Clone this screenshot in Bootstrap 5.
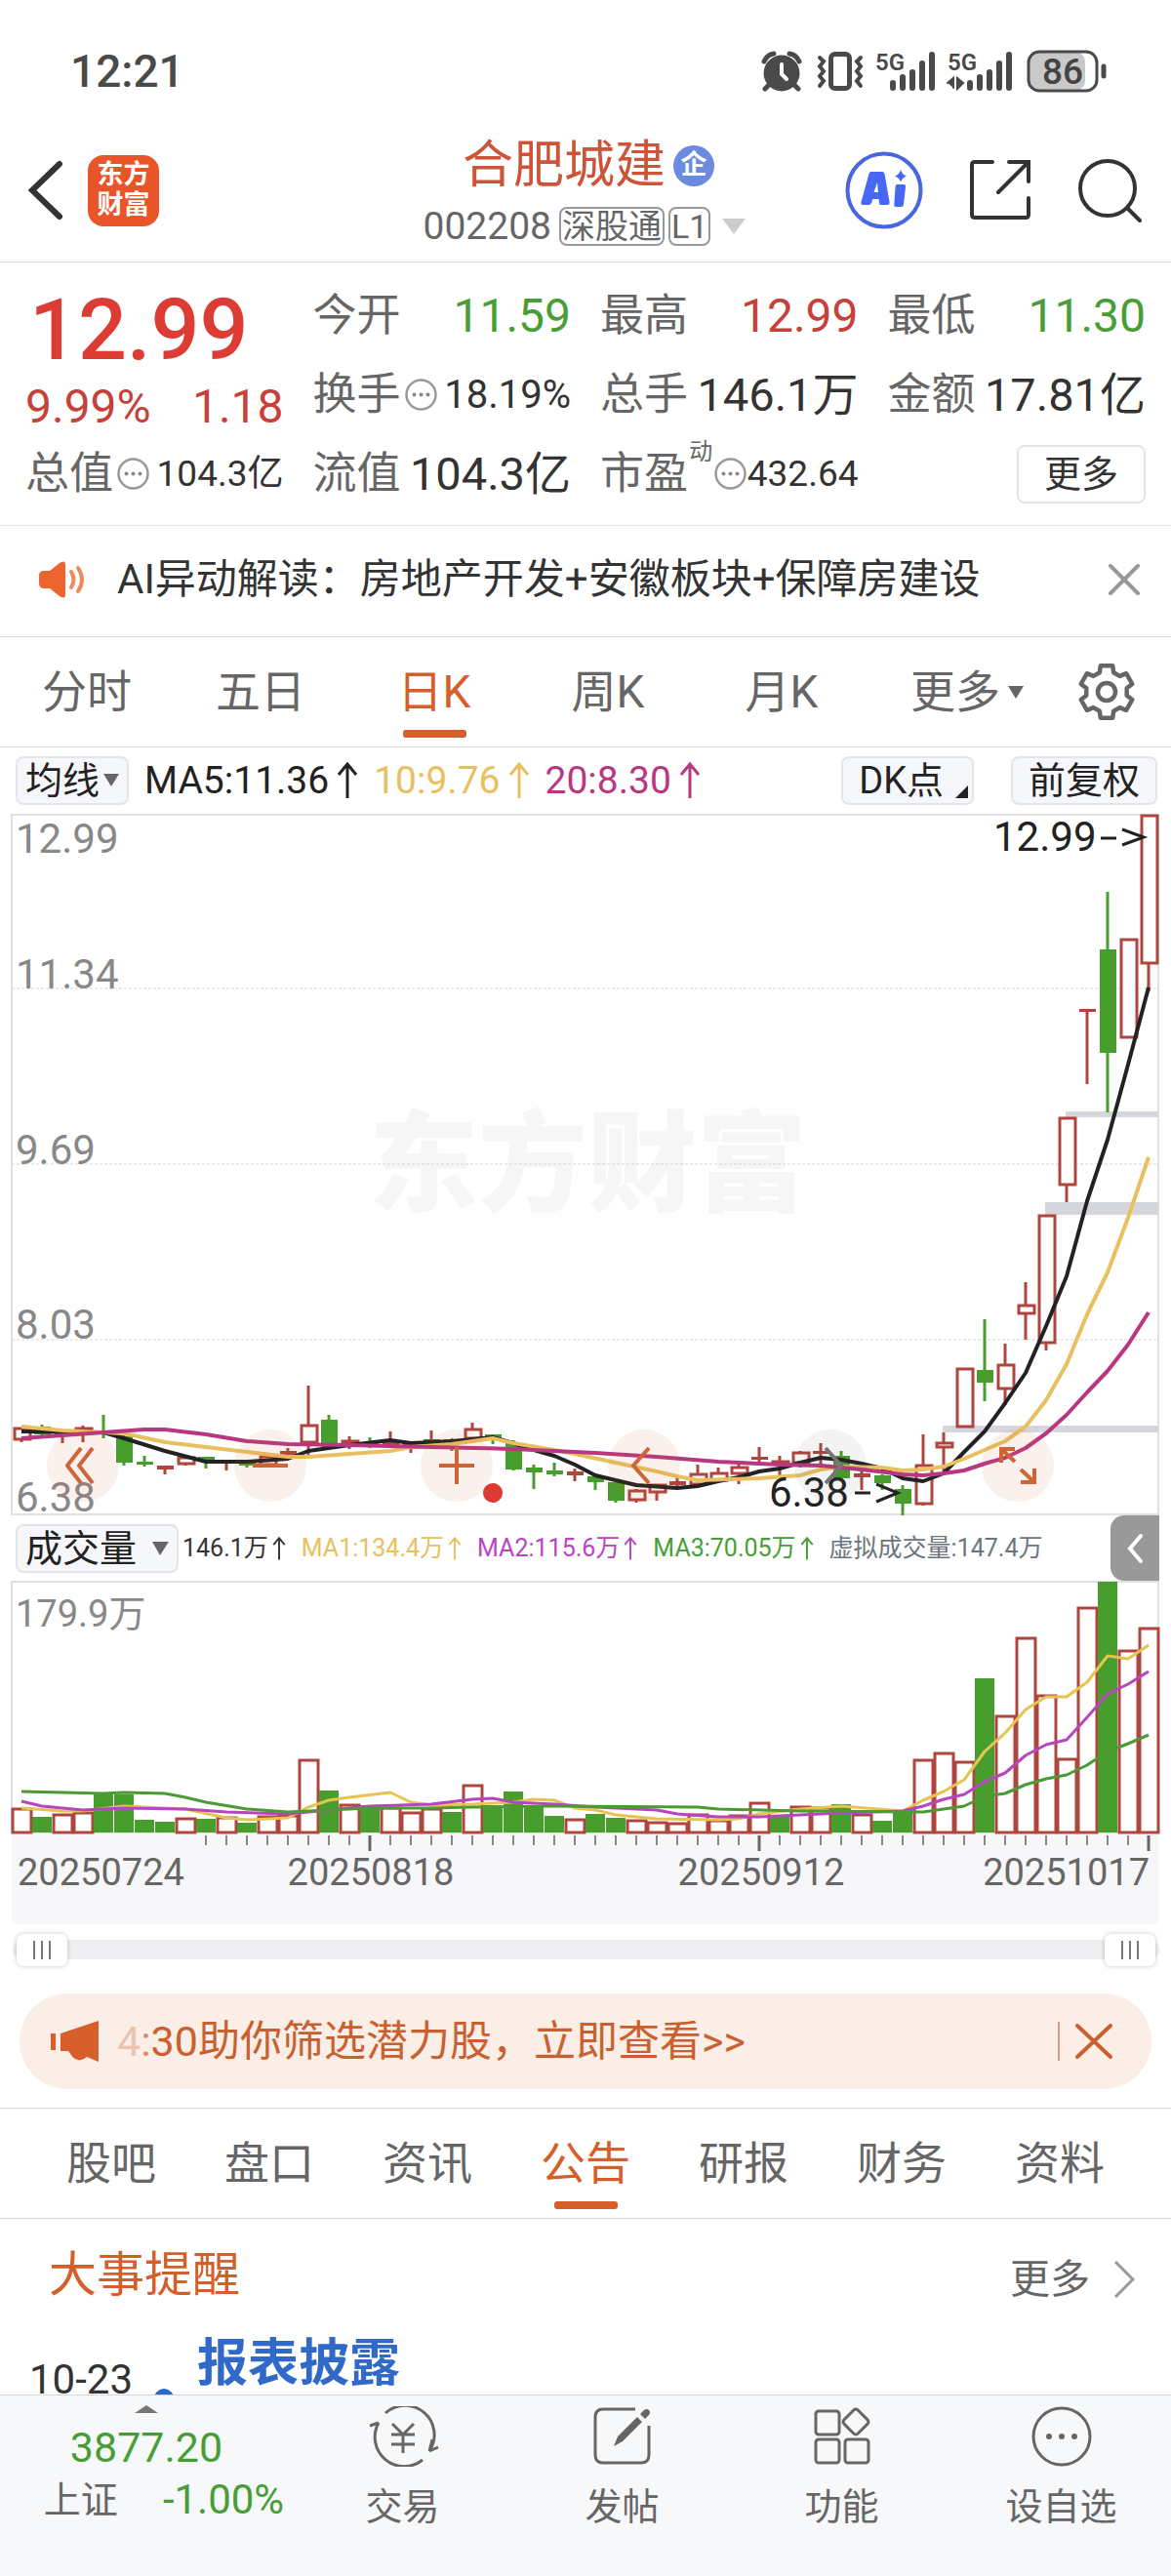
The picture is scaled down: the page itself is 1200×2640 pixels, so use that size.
<!DOCTYPE html>
<html lang="zh-CN">
<head>
<meta charset="utf-8">
<meta name="viewport" content="width=device-width, initial-scale=1">
<title>合肥城建 002208</title>
<link rel="stylesheet" href="https://cdn.jsdelivr.net/npm/bootstrap@5.3.0/dist/css/bootstrap.min.css">
<style>
:root{--ink:#333;--soft:#666;--rise:#c8403a;--fall:#489e36;--accent:#d55f2b;--hair:#d8d8d8}
body{font-family:Roboto,"Noto Sans CJK SC",sans-serif;color:var(--ink);background:#fff;font-size:40px;line-height:50px;overflow-x:hidden}
button{font-family:inherit;color:inherit;background:none;border:0;padding:0}
a{color:inherit;text-decoration:none}
svg{display:block;flex:none}
.hairline{border-bottom:1px solid var(--hair)}
.c-soft{color:var(--soft)}.c-rise{color:var(--rise)}.c-fall{color:var(--fall)}.c-accent{color:var(--accent)}.c-gold{color:#e9c05f}.c-plum{color:#b83780}.c-violet{color:#b845c0}
.status-row{padding:46px 62px 0 72px;line-height:54px;font-size:46px;font-weight:500;color:#4a4a4a}
.top-bar{padding:22px 30px 0 28px;height:169px}
.side-zone{flex:1 1 0}
.stock-name{font-size:52px;line-height:64px;color:#cc5539;font-weight:400}
.ent-badge{width:42px;height:42px;border-radius:50%;background:#6a8be0;color:#fff;font-size:27px;line-height:40px;font-weight:700;text-align:center}
.code-line{font-size:39px;line-height:40px;padding-top:10px}
.code-tag{border:2px solid #999;border-radius:8px;font-size:34px;line-height:36px;padding:0 1px}
.brand-tile{width:73px;height:73px;border-radius:16px;background:#e95428;color:#fff;font-size:27px;line-height:31px;font-weight:700;text-align:center;padding-top:5px}
.quote-grid{display:grid;grid-template-columns:repeat(4,minmax(0,1fr));column-gap:30px;grid-auto-rows:81px;padding:14px 26px 12px;border-bottom:1px solid #e6e6e6}
.price-box{grid-row:span 2;padding-top:1px}
.price-now{font-size:88px;line-height:108px;font-weight:500;color:#dc3c34;padding-left:4px}
.q-label{font-size:45px;color:var(--soft)}
.q-cell{display:flex;align-items:center;justify-content:space-between;white-space:nowrap;font-size:47px}
.q-num{font-size:48px}.q-mid{font-size:40px}.q-small{font-size:37px}
.q-sup{font-size:24px;line-height:24px;align-self:flex-start;padding-top:6px}
.more-btn{border:2px solid #e5e5e5;border-radius:8px;width:132px;height:60px;font-size:38px;line-height:54px}
.alert-row{height:114px;padding:0 32px 4px 38px;font-size:42px}
.tab-row{height:113px}
.tab-item{position:relative;font-size:46px;height:112px;line-height:112px;color:var(--soft);text-align:center;flex:1 1 0}
.tab-item.is-on{color:var(--accent)}
.tab-item.is-on::after{content:"";position:absolute;left:50%;margin-left:-32px;bottom:9px;width:65px;height:8px;border-radius:3px;background:var(--accent)}
.period-tabs{flex:0 0 89%;display:grid;grid-template-columns:repeat(6,minmax(0,1fr))}
.tool-btn{background:#f6f7fa;border:2px solid #e3e5e9;border-radius:8px;height:50px;font-size:38px;line-height:44px;color:#222;padding:0 8px;display:flex;align-items:center;gap:4px}
.ma-row{height:67px;padding:0 14px 0 16px;color:#222;white-space:nowrap;font-size:39px}
.ma-row .tool-btn+.tool-btn{margin-left:38px}
.vol-row{height:67px;padding:0 12px 0 16px;font-size:25px;white-space:nowrap}
.fold-btn{width:50px;height:67px;border-radius:14px 0 0 14px;background:#999}
.plot{position:relative}
.plot svg.canvas{width:100%;height:auto;overflow:visible}
.plot-tools{position:absolute;left:0;right:0;top:632px;padding:0 10% 0 4%;display:flex;justify-content:space-between}
.round-btn{width:74px;height:74px;border-radius:50%;background:rgba(213,95,43,.09);display:flex;align-items:center;justify-content:center}
.round-btn.is-off{background:rgba(80,80,80,.07)}
.range-wrap{display:grid;height:52px;padding:0 16px 0 17px;align-items:center;position:relative}
.range-wrap::before{content:"";grid-area:1/1;height:20px;border-radius:10px;background:#efeff2;margin:0 -4px}
.range-wrap input{grid-area:1/1;appearance:none;-webkit-appearance:none;width:100%;height:34px;margin:0;background:none;pointer-events:none}
.range-wrap input::-webkit-slider-thumb{-webkit-appearance:none;pointer-events:auto;width:52px;height:33px;border-radius:7px;border:0;box-shadow:0 0 5px rgba(0,0,0,.22);background:linear-gradient(90deg,transparent 17px,#777 17px 19px,transparent 19px 25px,#777 25px 27px,transparent 27px 33px,#777 33px 35px,transparent 35px) 0 7px/52px 19px no-repeat #fff}
.promo{margin:19px 20px;height:98px;border-radius:49px;background:#faeee7;padding:0 40px 0 32px;font-size:43px;color:#c8602f}
.promo-sep{width:2px;height:40px;background:#dba085}
.info-tabs{border-top:1px solid var(--hair);padding:0 33px}
.news{height:180px;overflow:hidden;padding:0 37px 0 30px}
.news-head{height:116px;padding-left:20px;font-size:49px}
.news-more{font-size:41px}
.news-date{font-size:42px}
.news-item{font-size:52px;font-weight:700;color:#3069c8;line-height:66px}
.news-dot{width:20px;height:20px;border-radius:50%;background:#3069c8;margin:58px 24px 0 22px}
.dock{border-top:1px solid #d3d5d9;background:#f7f8fa;display:grid;grid-template-columns:4fr 3fr 3fr 3fr 3fr;height:187px;color:var(--soft);font-size:38px;line-height:46px;text-align:center}
.dock-link{display:flex;flex-direction:column;align-items:center;padding-top:11px;gap:18px}
.dock-index{padding-top:10px}
.idx-num{font-size:43px;line-height:50px;padding-top:10px}
.idx-chg{font-size:42px}
.idx-sub{padding:6px 0 0 36px;gap:46px}
</style>
</head>
<body>
<header>
  <div class="status-row d-flex justify-content-between align-items-center">
    <span>12:21</span>
    <svg width="358" height="54" viewBox="0 -5 358 54" fill="none" stroke="#4a4a4a" stroke-linecap="round">
      <g><circle cx="21" cy="24" r="18.500" fill="#4a4a4a" stroke="none"/><path d="M3 12Q6 5 13 4M39 12Q36 5 29 4M8 36l-4 4M34 36l4 4" stroke-width="5"/><path d="M21 15v10l5 5" stroke="#fff" stroke-width="4"/></g>
      <g stroke-width="5"><rect x="71.500" y="4.500" width="19" height="35" rx="4"/><path d="M60 8l4 4-4 5 4 5-4 5 4 5-4 5M102 8l-4 4 4 5-4 5 4 5-4 5 4 5" stroke-width="4"/></g>
      <g stroke-width="6"><path d="M135 34v5M145 28v11M155 23v16M165 14v25M175 5v34M214 34v5M224 28v11M234 23v16M244 14v25M254 5v34"/></g>
      <path d="M191 34l6-5v10M201 29v11l6-6z" stroke="#4a4a4a" stroke-width="2" fill="#4a4a4a"/>
      <g fill="#4a4a4a" stroke="none" font-family="Roboto" font-weight="600" font-size="24"><text x="117" y="21">5G</text><text x="191" y="21">5G</text></g>
      <rect x="274" y="2" width="58" height="40" rx="10" fill="#c9c9c9" stroke="none"/>
      <rect x="274" y="2" width="70" height="40" rx="11" stroke-width="3"/>
      <path d="M351 17v10" stroke-width="5"/>
      <text x="288" y="35" fill="#444" stroke="none" font-family="Roboto" font-weight="500" font-size="37">86</text>
    </svg>
  </div>
  <div class="top-bar hairline d-flex align-items-center">
    <div class="side-zone d-flex align-items-center">
      <button type="button" aria-label="返回"><svg width="38" height="62" viewBox="0 0 38 62" fill="none" stroke="#333" stroke-width="6" stroke-linecap="round"><path d="M33 4L5 31l28 27"/></svg></button>
      <div class="brand-tile ms-4">东方<br>财富</div>
    </div>
    <div class="text-center">
      <div class="d-flex justify-content-center align-items-center gap-2 ps-2"><h1 class="stock-name m-0">合肥城建</h1><span class="ent-badge">企</span></div>
      <div class="code-line d-flex align-items-center justify-content-center gap-1 c-soft"><span class="pe-1">002208</span><span class="code-tag">深股通</span><span class="code-tag">L1</span>
        <svg class="ms-2" width="24" height="16"><path d="M0 0h24L12 16z" fill="#ccc"/></svg></div>
    </div>
    <div class="side-zone d-flex align-items-center justify-content-end">
      <button type="button" aria-label="AI"><svg width="80" height="80" viewBox="0 0 80 80"><circle cx="40" cy="40" r="37.500" fill="none" stroke="#4866e0" stroke-width="4"/><path d="M26.500 21h11.500q2 0 2.500 2l5 29q.3 3-2 3h-7q-1.500 0-1.500-2l-.5-4h-6l-1.500 4q-.8 2-2.500 2h-6q-3 0-2-3l8-29q.6-2 2-2zM33 32l-3.500 10h4.500z" fill="#4668f5" fill-rule="evenodd"/><path d="M53 34h7q2.500 0 2 2.500l-2 18q-.3 2.500-2.500 2.500h-5q-2.500 0-2.200-2.500l1.200-18q.3-2.500 1.500-2.500zM57 19q1.500 5 6 6.500q-4.500 1.500-6 6q-1.500-4.500-6-6q4.500-1.500 6-6.500z" fill="#4668f5"/></svg></button>
      <button type="button" aria-label="分享" class="ms-5"><svg width="62" height="62" viewBox="0 0 62 62" fill="none" stroke="#333" stroke-width="4" stroke-linecap="round"><path d="M23 2H5q-3 0-3 3v51q0 3 3 3h52q3 0 3-3V39M40 2h20v20M60 2L29 33"/></svg></button>
      <button type="button" aria-label="搜索" class="ms-5"><svg width="66" height="66" viewBox="0 0 66 66" fill="none" stroke="#333" stroke-width="4" stroke-linecap="round"><circle cx="31" cy="31" r="28"/><path d="M51 51l13 13"/></svg></button>
    </div>
  </div>
</header>
<main>
  <section class="quote-grid">
    <div class="price-box">
      <div class="price-now">12.99</div>
      <div class="d-flex justify-content-between q-num c-rise"><span>9.99%</span><span>1.18</span></div>
    </div>
    <div class="q-cell"><span class="q-label">今开</span><span class="q-num c-fall">11.59</span></div>
    <div class="q-cell"><span class="q-label">最高</span><span class="q-num c-rise">12.99</span></div>
    <div class="q-cell"><span class="q-label">最低</span><span class="q-num c-fall">11.30</span></div>
    <div class="q-cell"><span class="q-label d-flex align-items-center gap-1">换手<svg width="33" height="33"><use href="#dots"/></svg></span><span class="q-mid">18.19%</span></div>
    <div class="q-cell"><span class="q-label">总手</span><span>146.1万</span></div>
    <div class="q-cell"><span class="q-label">金额</span><span>17.81亿</span></div>
    <div class="q-cell"><span class="q-label d-flex align-items-center gap-1">总值<svg width="33" height="33"><use href="#dots"/></svg></span><span class="q-small">104.3亿</span></div>
    <div class="q-cell"><span class="q-label">流值</span><span>104.3亿</span></div>
    <div class="q-cell"><span class="q-label">市盈</span><span class="q-sup c-soft">动</span><svg width="33" height="33"><use href="#dots"/></svg><span class="q-small">432.64</span></div>
    <div class="q-cell justify-content-end"><button type="button" class="more-btn">更多</button></div>
  </section>
  <section class="alert-row hairline d-flex align-items-center">
    <svg width="50" height="40" viewBox="0 0 50 40"><path d="M7 11h6L23 3q6-4 6 2v30q0 6-6 2L13 29H7q-5 0-5-5v-8q0-5 5-5z" fill="#ec6530"/><path d="M35 12q5 8 0 16M42 8q8 12 0 24" fill="none" stroke="#ec8a60" stroke-width="4" stroke-linecap="round"/></svg>
    <span class="flex-grow-1 ps-4 ms-2">AI异动解读：房地产开发+安徽板块+保障房建设</span>
    <button type="button" aria-label="关闭"><svg width="32" height="32" viewBox="0 0 32 32" stroke="#999" stroke-width="4" stroke-linecap="round"><path d="M2 2l28 28M30 2L2 30"/></svg></button>
  </section>
  <nav class="tab-row hairline d-flex align-items-center">
    <div class="period-tabs">
      <a href="#" class="tab-item">分时</a><a href="#" class="tab-item">五日</a><a href="#" class="tab-item is-on">日K</a><a href="#" class="tab-item">周K</a><a href="#" class="tab-item">月K</a>
      <a href="#" class="tab-item d-flex align-items-center justify-content-center gap-2 ps-4">更多<svg width="16" height="13"><path d="M0 0h16L8 13z" fill="#666"/></svg></a>
    </div>
    <button type="button" aria-label="设置" class="mx-auto"><svg width="60" height="60" viewBox="0 0 60 60" fill="none" stroke="#666" stroke-width="4.500" stroke-linejoin="round"><path d="M22.800 10.300L23.800 3.200H36.200L37.200 10.300L43.500 13.900L50.100 11.200L56.300 22L50.700 26.300V33.700L56.300 38L50.100 48.800L43.500 46.100L37.200 49.700L36.200 56.800H23.800L22.800 49.700L16.500 46.100L9.900 48.800L3.700 38L9.300 33.700V26.300L3.700 22L9.900 11.200L16.500 13.900z"/><circle cx="30" cy="30" r="9"/></svg></button>
  </nav>
  <section class="ma-row d-flex align-items-center">
    <button type="button" class="tool-btn">均线<svg width="16" height="13"><path d="M0 0h16L8 13z" fill="#666"/></svg></button>
    <span class="ps-3">MA5:11.36</span><svg class="ms-2" width="22" height="38"><use href="#up"/></svg>
    <span class="ps-3 c-gold">10:9.76</span><svg class="ms-2 c-gold" width="22" height="38"><use href="#up"/></svg>
    <span class="ps-3 c-plum">20:8.30</span><svg class="ms-2 c-plum" width="22" height="38"><use href="#up"/></svg>
    <button type="button" class="tool-btn ms-auto ps-3 pe-1">DK点<svg class="ms-2 mt-4" width="13" height="13"><path d="M13 0v13H0z" fill="#222"/></svg></button>
    <button type="button" class="tool-btn px-3">前复权</button>
  </section>
  <section class="plot">
    <svg class="canvas" id="kline" viewBox="0 833 1200 720" role="img" aria-label="日K线"></svg>
    <div class="plot-tools">
      <button type="button" class="round-btn" aria-label="最左"><svg width="36" height="38" viewBox="0 0 36 38" fill="none" stroke="#cf6436" stroke-width="4"><path d="M16 1L2 19l14 18M28 1L14 19l14 18"/></svg></button>
      <button type="button" class="round-btn" aria-label="缩小"><svg width="36" height="36" stroke="#cf6436" stroke-width="4"><path d="M0 18h36"/></svg></button>
      <button type="button" class="round-btn" aria-label="放大"><svg width="36" height="38" stroke="#cf6436" stroke-width="4"><path d="M0 19h36M18 0v38"/></svg></button>
      <button type="button" class="round-btn" aria-label="左移"><svg width="30" height="38" fill="none" stroke="#cf6436" stroke-width="4"><path d="M20 1L4 19l16 18"/></svg></button>
      <button type="button" class="round-btn is-off" aria-label="右移"><svg width="30" height="38" fill="none" stroke="#777" stroke-width="4"><path d="M10 1l16 18-16 18"/></svg></button>
      <button type="button" class="round-btn" aria-label="全屏"><svg width="38" height="38" fill="none" stroke="#cf6436" stroke-width="4"><path d="M2 16V2h14M2 2l14 13M36 22v14H22M36 36L22 23"/></svg></button>
    </div>
  </section>
  <section class="vol-row d-flex align-items-center">
    <button type="button" class="tool-btn gap-3 pe-2">成交量<svg width="17" height="14"><path d="M0 0h17L8 14z" fill="#666"/></svg></button>
    <span class="ps-1">146.1万</span><svg width="14" height="36" viewBox="0 0 22 38" class="ms-1"><use href="#up"/></svg>
    <span class="ps-3 c-gold">MA1:134.4万</span><svg width="14" height="36" viewBox="0 0 22 38" class="ms-1 c-gold"><use href="#up"/></svg>
    <span class="ps-3 c-violet">MA2:115.6万</span><svg width="14" height="36" viewBox="0 0 22 38" class="ms-1 c-violet"><use href="#up"/></svg>
    <span class="ps-3 c-fall">MA3:70.05万</span><svg width="14" height="36" viewBox="0 0 22 38" class="ms-1 c-fall"><use href="#up"/></svg>
    <span class="ps-3 text-secondary">虚拟成交量:147.4万</span>
    <button type="button" class="fold-btn ms-auto d-flex align-items-center justify-content-center" aria-label="展开"><svg width="18" height="32" fill="none" stroke="#fff" stroke-width="4" stroke-linecap="round"><path d="M15 3L4 16l11 13"/></svg></button>
  </section>
  <section class="plot"><svg class="canvas" id="volume" viewBox="0 1620 1200 352" role="img" aria-label="成交量"></svg></section>
  <div class="range-wrap"><input type="range" aria-label="起始日期" min="0" max="100" value="0"><input type="range" aria-label="结束日期" min="0" max="100" value="100"></div>
  <section class="promo d-flex align-items-center">
    <svg width="52" height="44" viewBox="0 0 52 44" fill="#d75f2b"><path d="M0 14h5v17H0zM10 14L49 1v42l-12-5q-4 4-9 3t-7-5l-3-4h-8z"/></svg>
    <span class="flex-grow-1 ps-3"><span style="color:#ebc3af">4</span><span style="color:#d98c67">:</span>30助你筛选潜力股，立即查看&gt;&gt;</span>
    <span class="promo-sep"></span>
    <button type="button" class="ms-3" aria-label="关闭"><svg width="38" height="36" viewBox="0 0 38 36" stroke="#c8602f" stroke-width="4" stroke-linecap="round"><path d="M2 2l34 32M36 2L2 34"/></svg></button>
  </section>
  <nav class="info-tabs hairline d-flex">
    <a href="#" class="tab-item">股吧</a><a href="#" class="tab-item">盘口</a><a href="#" class="tab-item">资讯</a><a href="#" class="tab-item is-on">公告</a><a href="#" class="tab-item">研报</a><a href="#" class="tab-item">财务</a><a href="#" class="tab-item">资料</a>
  </nav>
  <section class="news">
    <div class="news-head d-flex align-items-center justify-content-between"><span class="c-accent">大事提醒</span>
      <a href="#" class="news-more c-soft d-flex align-items-center gap-4 pt-2">更多<svg width="22" height="38" fill="none" stroke="#999" stroke-width="3"><path d="M2 1l18 18L2 37"/></svg></a></div>
    <div class="d-flex"><span class="news-date pt-4">10-23</span><span class="news-dot"></span><a href="#" class="news-item">报表披露</a></div>
  </section>
</main>
<footer class="dock">
  <a href="#" class="dock-index"><svg class="mx-auto" width="24" height="8"><path d="M12 0l12 8H0z" fill="#777"/></svg>
    <span class="d-block idx-num c-fall">3877.20</span>
    <span class="idx-sub d-flex justify-content-center"><span>上证</span><span class="idx-chg c-fall">-1.00%</span></span></a>
  <a href="#" class="dock-link"><svg width="74" height="62" viewBox="0 0 74 62" fill="none" stroke="#666" stroke-width="3"><path d="M19 7A30 30 0 0 1 64 46M64 46l9-4M64 46l3-12M57 55A30 30 0 0 1 12 17M12 17l-9 3M26 18l11 11 11-11M25 29h24M25 39h24M37 29v19"/></svg><span>交易</span></a>
  <a href="#" class="dock-link"><svg width="60" height="62" viewBox="0 0 60 62" fill="none" stroke="#666" stroke-width="3"><path d="M43 3H10q-8 0-8 8v39q0 8 8 8h39q8 0 8-8V20"/><path d="M21 41l4-10L45 11l5 5L30 36zM48 8l4-4q3-2 5 0t0 5l-4 4z" fill="#666" stroke="none"/></svg><span>发帖</span></a>
  <a href="#" class="dock-link"><svg width="60" height="62" viewBox="0 0 60 62" fill="none" stroke="#666" stroke-width="3"><rect x="3" y="5" width="24" height="24" rx="3"/><rect x="3" y="34" width="24" height="24" rx="3"/><rect x="33" y="34" width="24" height="24" rx="3"/><rect x="34" y="6" width="20" height="20" rx="3" transform="rotate(45 44 16)"/></svg><span>功能</span></a>
  <a href="#" class="dock-link"><svg width="62" height="62" viewBox="0 0 62 62"><circle cx="31" cy="31" r="29" fill="none" stroke="#666" stroke-width="3"/><g fill="#666"><circle cx="18" cy="31" r="3"/><circle cx="31" cy="31" r="3"/><circle cx="44" cy="31" r="3"/></g></svg><span>设自选</span></a>
</footer>
<svg width="0" height="0" class="position-absolute"><defs>
  <g id="dots"><circle cx="16.500" cy="16.500" r="15" fill="none" stroke="#999" stroke-width="2.500"/><g fill="#888"><circle cx="9.500" cy="16.500" r="2"/><circle cx="16.500" cy="16.500" r="2"/><circle cx="23.500" cy="16.500" r="2"/></g></g>
  <path id="up" d="M11 37V3M2 13l9-11 9 11" fill="none" stroke="currentColor" stroke-width="3"/>
</defs></svg>
<script src="https://cdn.jsdelivr.net/npm/bootstrap@5.3.0/dist/js/bootstrap.bundle.min.js"></script>
<script>
const RED = '#b0443e', GREEN = '#489e2c';
const X = i => 22 + 21 * i;
// one row per session: type (r hollow, f filled red, g green), high, body top, body bottom, low
const candles = [
['r',1463,1463,1475,1478],['g',1460,1462,1470,1472],['f',1467,1467,1469,1479],['r',1461,1463,1467,1478],['g',1450,1466,1468,1474],['g',1470,1472,1499,1502],['g',1492,1498,1501,1503],['f',1502,1502,1506,1511],['r',1493,1493,1500,1502],['g',1493,1493,1498,1505],
['f',1497,1497,1499,1507],['g',1498,1498,1502,1504],['r',1492,1492,1501,1501],['f',1484,1487,1492,1492],['r',1420,1460,1478,1492],['g',1450,1455,1483,1483],['r',1472,1476,1480,1485],['g',1473,1478,1481,1484],['f',1467,1477,1483,1483],['f',1478,1478,1482,1489],
['f',1466,1475,1480,1480],['g',1474,1475,1477,1487],['r',1458,1464,1474,1478],['g',1470,1470,1475,1480],['g',1476,1479,1506,1507],['g',1501,1504,1509,1526],['g',1499,1507,1511,1513],['f',1505,1508,1512,1518],['g',1512,1513,1519,1527],['g',1517,1519,1538,1540],
['r',1526,1527,1537,1540],['r',1521,1521,1529,1538],['f',1514,1518,1522,1525],['r',1501,1510,1521,1521],['r',1504,1509,1517,1517],['r',1499,1503,1510,1521],['f',1483,1493,1495,1499],['r',1492,1497,1500,1512],['r',1487,1488,1499,1504],['f',1479,1487,1489,1502],
['g',1487,1492,1515,1518],['f',1508,1510,1514,1527],['g',1511,1512,1520,1527],['g',1522,1526,1541,1553],['r',1470,1501,1541,1543],['r',1468,1478,1483,1509],['r',1402,1402,1462,1462],['g',1352,1404,1417,1436],['r',1377,1398,1423,1440],['r',1314,1337,1346,1373],
['r',1245,1245,1376,1384],['r',1145,1145,1214,1232],['f',1034,1034,1036,1111],['g',914,973,1079,1140],['r',962,962,1063,1063],['r',835,835,987,1016]];
const ma5 = [[0,1467],[4,1468],[5,1474],[7,1487],[9,1498],[11,1498],[13,1495],[14,1487],[16,1481],[18,1476],[19,1479],[21,1477],[23,1473],[24,1479],[25,1486],[26,1492],[27,1501],[28,1512],[29,1517],[30,1522],[32,1525],[33,1523],[34,1518],[35,1514],[36,1508],[37,1505],[38,1499],[39,1494],[40,1496],[41,1500],[42,1505],[43,1515],[44,1518],[45,1510],[46,1488],[47,1467],[48,1438],[49,1407],[50,1359],[51,1308],[52,1231],[53,1168],[54,1091],[55,1012]];
const ma10 = [[0,1462],[2,1466],[4,1468],[5,1469],[7,1478],[9,1483],[11,1488],[13,1493],[14,1493],[16,1490],[18,1487],[19,1483],[21,1480],[23,1474],[24,1479],[26,1486],[27,1490],[29,1499],[31,1508],[32,1513],[33,1517],[36,1515],[38,1512],[39,1506],[40,1503],[42,1504],[43,1507],[44,1506],[45,1503],[46,1495],[47,1486],[48,1477],[49,1462],[50,1435],[51,1398],[52,1347],[53,1304],[54,1248],[55,1186]];
const ma20 = [[0,1474],[2,1471],[4,1468],[6,1465],[7,1465],[9,1470],[11,1477],[13,1480],[16,1481],[20,1483],[24,1485],[28,1489],[31,1493],[34,1498],[37,1501],[39,1502],[41,1506],[43,1511],[44,1512],[45,1510],[46,1507],[47,1500],[48,1494],[49,1484],[50,1469],[51,1450],[52,1427],[53,1405],[54,1378],[55,1345]];
const line = (pts, color, w) => `<polyline fill="none" stroke="${color}" stroke-width="${w}" stroke-linejoin="round" points="${pts.map(p => X(p[0]) + ',' + p[1]).join(' ')}"/>`;
let s = '<g fill="#f6f6f6" font-family="Noto Sans CJK SC" font-weight="900" font-size="112"><text x="378" y="1233">东方财富</text></g>';
s += '<path d="M12 835H1187V1552H12z" fill="none" stroke="#e0e0e0" stroke-width="2"/>';
for (const y of [1013, 1193, 1373]) s += `<path d="M12 ${y}H1187" stroke="#d4d4d4" stroke-width="1" stroke-dasharray="3 2"/>`;
s += '<g fill="#d5d6db"><rect x="1092" y="1139" width="95" height="6"/><rect x="1071" y="1232" width="116" height="13"/><rect x="966" y="1461" width="221" height="7"/></g>';
candles.forEach(([t, h, a, b, l], i) => {
  const x = X(i), c = t === 'g' ? GREEN : RED;
  s += `<path d="M${x} ${h}V${a}M${x} ${b}V${l}" stroke="${c}" stroke-width="3"/>`;
  s += t === 'r' ? `<rect x="${x - 7}" y="${a + 1}" width="16" height="${b - a - 1}" fill="#fff" stroke="${c}" stroke-width="3"/>`
                 : `<rect x="${x - 8}" y="${a}" width="17" height="${Math.max(3, b - a)}" fill="${c}"/>`;
});
s += '<g font-size="42" fill="#888"><text x="16" y="874">12.99</text><text x="16" y="1013">11.34</text><text x="16" y="1193">9.69</text><text x="16" y="1372">8.03</text><text x="16" y="1549">6.38</text></g>';
s += line(ma5, '#222', 4) + line(ma10, '#e9c05f', 4) + line(ma20, '#b83780', 4);
s += '<g font-size="42" fill="#222"><text x="1018" y="872">12.99</text><text x="788" y="1544">6.38</text></g>';
s += '<path d="M1128 859h16M1150 850l22 8-22 8M876 1530h16M898 1521l22 9-22 9" fill="none" stroke="#222" stroke-width="3"/><circle cx="505" cy="1530" r="10" fill="#dc3a32"/>';
document.getElementById('kline').innerHTML = s;

// volume bar tops, same session order
const tops = [1853,1862,1859,1857,1838,1839,1865,1867,1863,1864,1862,1868,1861,1860,1803,1835,1849,1850,1852,1857,1853,1857,1829,1850,1836,1850,1861,1864,1859,1863,1865,1867,1868,1859,1865,1860,1847,1860,1851,1852,1849,1859,1866,1855,1803,1796,1805,1720,1758,1678,1737,1802,1647,1621,1691,1668];
const down = new Set([1,4,5,6,7,9,11,15,17,21,23,24,25,26,28,29,37,40,42,43,47,53]);
const v1 = [[0,1853],[2,1856],[3,1856],[5,1851],[8,1854],[10,1863],[11,1865],[13,1863],[14,1852],[15,1845],[16,1842],[18,1837],[19,1847],[20,1850],[22,1849],[24,1847],[25,1844],[26,1845],[27,1853],[28,1855],[29,1860],[31,1864],[34,1865],[35,1864],[36,1859],[38,1854],[40,1851],[43,1856],[44,1845],[45,1836],[46,1824],[47,1795],[48,1776],[49,1752],[50,1739],[51,1739],[52,1724],[53,1697],[54,1700],[55,1686]];
const v2 = [[0,1846],[1,1851],[3,1855],[5,1853],[8,1854],[10,1857],[13,1859],[15,1855],[17,1851],[20,1849],[22,1844],[23,1843],[24,1847],[26,1849],[28,1852],[31,1855],[32,1859],[34,1862],[36,1862],[38,1860],[40,1858],[43,1856],[44,1851],[45,1844],[46,1839],[47,1826],[48,1817],[49,1799],[50,1788],[51,1783],[52,1760],[53,1736],[54,1726],[55,1713]];
const v3 = [[0,1836],[2,1837],[4,1838],[5,1837],[7,1838],[8,1842],[9,1847],[11,1854],[13,1857],[15,1855],[17,1853],[20,1853],[22,1852],[26,1851],[33,1852],[34,1854],[38,1856],[44,1857],[46,1851],[47,1841],[48,1838],[49,1829],[50,1823],[51,1819],[52,1809],[53,1795],[54,1787],[55,1778]];
let v = '<rect x="12" y="1880" width="1175" height="92" fill="#f7f7f9"/><path d="M12 1878V1621H1187V1878z" fill="none" stroke="#e0e0e0" stroke-width="2"/>';
tops.forEach((y, i) => {
  const x = X(i);
  v += down.has(i) ? `<rect x="${x - 10}" y="${y}" width="20" height="${1878 - y}" fill="${GREEN}"/>`
                   : `<rect x="${x - 9}" y="${y + 1}" width="19" height="${1877 - y}" fill="#fff" stroke="${RED}" stroke-width="3"/>`;
  if (i > 8) v += [17, 36, 55].includes(i) ? `<path d="M${x} 1881v16" stroke="#666" stroke-width="3"/>` : `<path d="M${x} 1881v10" stroke="#888" stroke-width="2"/>`;
});
v += line(v1, '#e6c450', 3) + line(v2, '#b845c0', 3) + line(v3, '#4c9a35', 3);
v += '<text x="16" y="1667" font-size="38" fill="#888">179.9万</text>';
v += '<g font-size="38" fill="#666"><text x="18" y="1932">20250724</text><text x="380" y="1932" text-anchor="middle">20250818</text><text x="780" y="1932" text-anchor="middle">20250912</text><text x="1178" y="1932" text-anchor="end">20251017</text></g>';
document.getElementById('volume').innerHTML = v;
</script>
</body>
</html>
